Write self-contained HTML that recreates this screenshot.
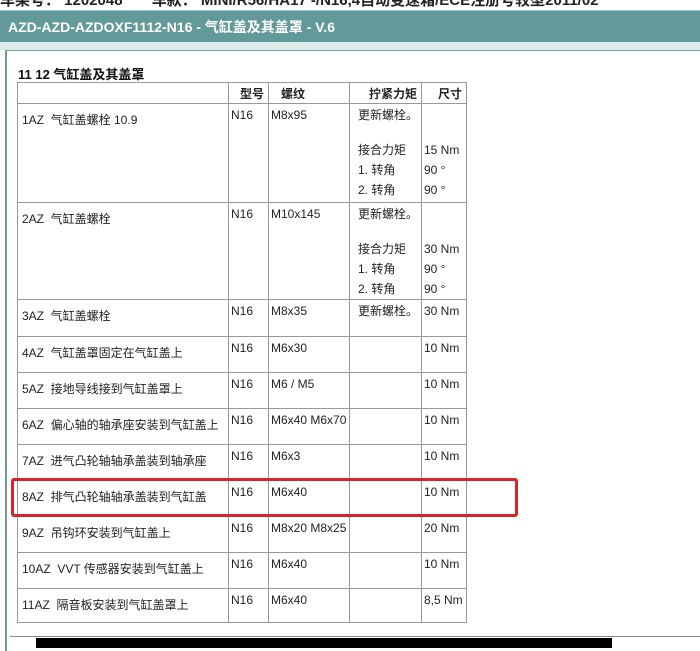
<!DOCTYPE html>
<html><head><meta charset="utf-8"><style>
body{margin:0;width:700px;height:644px;overflow:hidden;background:#fff;font-family:"Liberation Sans","Noto Sans CJK SC",sans-serif;position:relative}
.top{position:absolute;left:0;top:-11px;font-size:15px;font-weight:bold;color:#222;white-space:nowrap}
.hdr{position:absolute;left:0;top:10px;width:700px;height:32px;background:#629a9a;border-top:1px solid #9cc;color:#fff;font-size:14px;font-weight:bold;line-height:32px;padding-left:8px;box-sizing:border-box}
.line{position:absolute;left:0;top:42px;width:700px;height:8px;background:#dfeaea}
.box{position:absolute;left:5px;top:50px;width:700px;height:600px;border-left:2px solid #6e9e8e;border-top:1px solid #6e9e8e}
.title{position:absolute;left:18px;top:64px;font-size:13px;font-weight:bold;color:#111}
table{position:absolute;left:17px;top:82px;border-collapse:collapse;font-size:12px;color:#222}
td{border:1px solid #999;vertical-align:top;padding:1px 2px 0 2px;line-height:20px;box-sizing:border-box}
th{border:1px solid #999;font-weight:bold;font-size:12px;height:20px;padding:0 4px;text-align:right}
td.d{padding:6px 4px 0 4px}
.g{height:15px}
.red{position:absolute;left:11px;top:478px;width:507px;height:39px;border:3px solid #d8232a;border-radius:3px;box-sizing:border-box}
.bar{position:absolute;left:10px;top:636px;width:690px;height:10px;border-top:1px solid #888;background:#fff}
.bar div{position:absolute;left:26px;top:1px;width:576px;height:10px;background:#000}
</style></head><body>
<div class="top">车架号： 1202048 &nbsp;&nbsp;&nbsp;&nbsp;&nbsp; 车款： MINI/R56/HA17 -/N16,4自动变速箱/ECE注册号较型2011/02</div>
<div class="hdr">AZD-AZD-AZDOXF1112-N16 - 气缸盖及其盖罩 - V.6</div>
<div class="line"></div>
<div class="box"></div>
<div class="title">11 12 气缸盖及其盖罩</div>
<table>
<colgroup><col style="width:211px"><col style="width:40px"><col style="width:81px"><col style="width:72px"><col style="width:45px"></colgroup>
<tr><th></th><th>型号</th><th style="text-align:left;padding-left:12px">螺纹</th><th>拧紧力矩</th><th>尺寸</th></tr>
<tr style="height:99px"><td class="d">1AZ&nbsp; 气缸盖螺栓 10.9</td><td>N16</td><td>M8x95</td><td style="padding-left:8px">更新螺栓。<div class="g"></div>接合力矩<br>1. 转角<br>2. 转角</td><td><br><div class="g"></div>15 Nm<br>90 °<br>90 °</td></tr>
<tr style="height:96px"><td class="d">2AZ&nbsp; 气缸盖螺栓</td><td>N16</td><td>M10x145</td><td style="padding-left:8px">更新螺栓。<div class="g"></div>接合力矩<br>1. 转角<br>2. 转角</td><td><br><div class="g"></div>30 Nm<br>90 °<br>90 °</td></tr>
<tr style="height:37px"><td class="d">3AZ&nbsp; 气缸盖螺栓</td><td>N16</td><td>M8x35</td><td style="padding-left:8px">更新螺栓。</td><td>30 Nm</td></tr>
<tr style="height:36px"><td class="d">4AZ&nbsp; 气缸盖罩固定在气缸盖上</td><td>N16</td><td>M6x30</td><td></td><td>10 Nm</td></tr>
<tr style="height:36px"><td class="d">5AZ&nbsp; 接地导线接到气缸盖罩上</td><td>N16</td><td>M6 / M5</td><td></td><td>10 Nm</td></tr>
<tr style="height:36px"><td class="d">6AZ&nbsp; 偏心轴的轴承座安装到气缸盖上</td><td>N16</td><td>M6x40 M6x70</td><td></td><td>10 Nm</td></tr>
<tr style="height:36px"><td class="d">7AZ&nbsp; 进气凸轮轴轴承盖装到轴承座</td><td>N16</td><td>M6x3</td><td></td><td>10 Nm</td></tr>
<tr style="height:36px"><td class="d">8AZ&nbsp; 排气凸轮轴轴承盖装到气缸盖</td><td>N16</td><td>M6x40</td><td></td><td>10 Nm</td></tr>
<tr style="height:36px"><td class="d">9AZ&nbsp; 吊钩环安装到气缸盖上</td><td>N16</td><td>M8x20 M8x25</td><td></td><td>20 Nm</td></tr>
<tr style="height:36px"><td class="d">10AZ&nbsp; VVT 传感器安装到气缸盖上</td><td>N16</td><td>M6x40</td><td></td><td>10 Nm</td></tr>
<tr style="height:34px"><td class="d">11AZ&nbsp; 隔音板安装到气缸盖罩上</td><td>N16</td><td>M6x40</td><td></td><td>8,5 Nm</td></tr>
</table>
<div class="red"></div>
<div class="bar"><div></div></div>
</body></html>
